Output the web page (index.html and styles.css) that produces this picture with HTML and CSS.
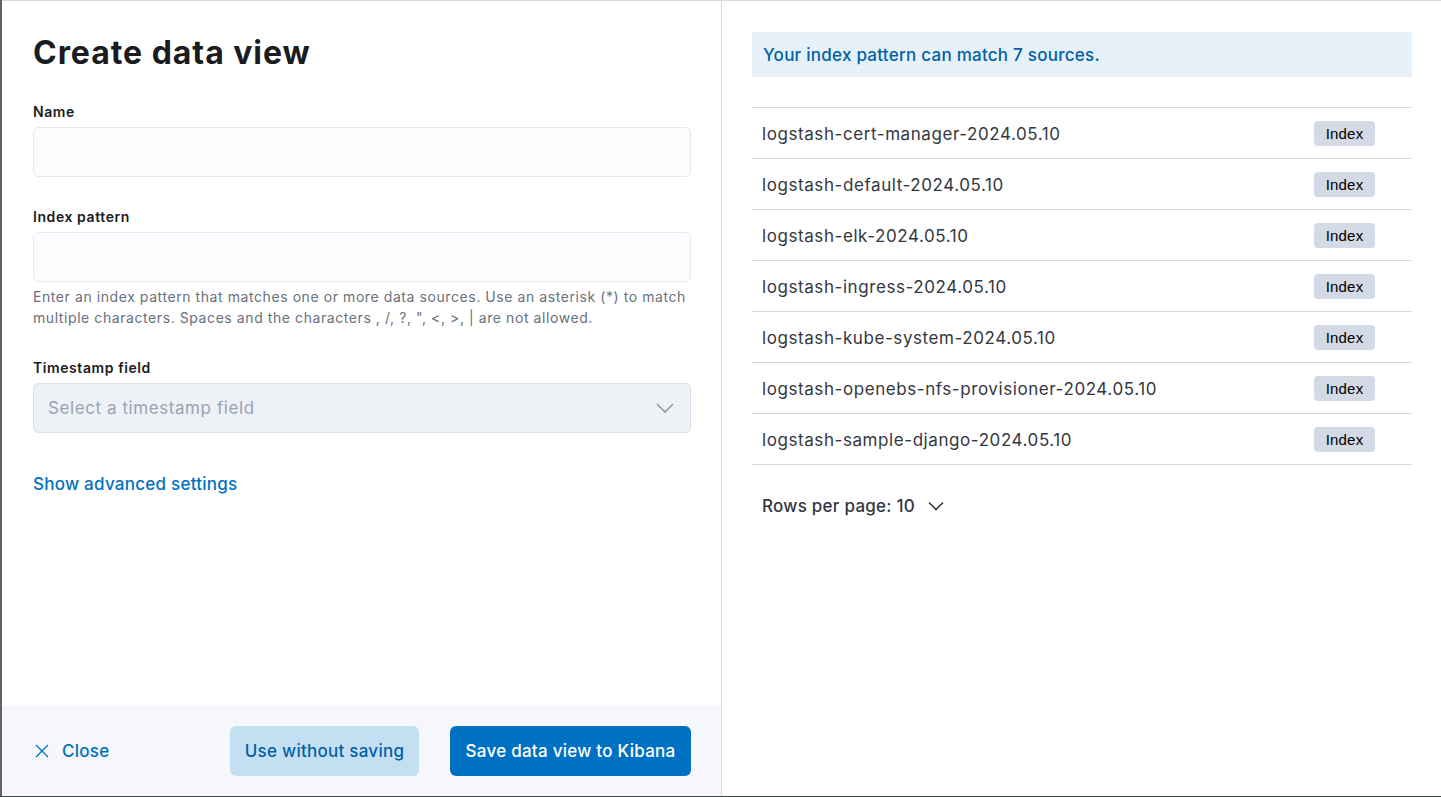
FILE: index.html
```html
<!DOCTYPE html>
<html lang="en">
<head>
<meta charset="utf-8">
<title>Create data view</title>
<link rel="stylesheet" href="styles.css">
</head>
<body>
<div class="frame">
  <div class="edge"></div>
  <div class="flyout">
    <section class="left">
      <div class="left-body">
        <h1 class="title">Create data view</h1>
        <div class="form-row">
          <label class="label">Name</label>
          <div class="input"></div>
        </div>
        <div class="form-row">
          <label class="label">Index pattern</label>
          <div class="input"></div>
          <p class="help">Enter an index pattern that matches one or more data sources. Use an asterisk (*) to match multiple characters. Spaces and the characters , /, ?, ", &lt;, &gt;, | are not allowed.</p>
        </div>
        <div class="form-row">
          <label class="label">Timestamp field</label>
          <div class="select">
            <span class="placeholder">Select a timestamp field</span>
            <svg class="chev" width="18" height="10" viewBox="0 0 18 10"><path d="M1 1l8 8 8-8" fill="none" stroke="#8c95a3" stroke-width="1.5"/></svg>
          </div>
        </div>
        <a class="link">Show advanced settings</a>
      </div>
      <footer class="footer">
        <a class="close">
          <svg width="14" height="14" viewBox="0 0 14 14"><path d="M1 1l12 12M13 1L1 13" stroke="#0071c2" stroke-width="1.3" fill="none"/></svg>
          <span>Close</span>
        </a>
        <div class="actions">
          <button class="btn btn-secondary">Use without saving</button>
          <button class="btn btn-primary">Save data view to Kibana</button>
        </div>
      </footer>
    </section>
    <section class="right">
      <div class="callout">Your index pattern can match 7 sources.</div>
      <div class="table">
        <div class="row"><span class="name">logstash-cert-manager-2024.05.10</span><span class="type"><span class="badge">Index</span></span></div>
        <div class="row"><span class="name">logstash-default-2024.05.10</span><span class="type"><span class="badge">Index</span></span></div>
        <div class="row"><span class="name">logstash-elk-2024.05.10</span><span class="type"><span class="badge">Index</span></span></div>
        <div class="row"><span class="name">logstash-ingress-2024.05.10</span><span class="type"><span class="badge">Index</span></span></div>
        <div class="row"><span class="name">logstash-kube-system-2024.05.10</span><span class="type"><span class="badge">Index</span></span></div>
        <div class="row"><span class="name">logstash-openebs-nfs-provisioner-2024.05.10</span><span class="type"><span class="badge">Index</span></span></div>
        <div class="row"><span class="name">logstash-sample-django-2024.05.10</span><span class="type"><span class="badge">Index</span></span></div>
      </div>
      <div class="pager">
        <span>Rows per page: 10</span>
        <svg width="16" height="10" viewBox="0 0 16 10"><path d="M1 1.5l7 7 7-7" fill="none" stroke="#343741" stroke-width="1.6"/></svg>
      </div>
    </section>
  </div>
</div>
</body>
</html>
```

FILE: styles.css
```css
* { box-sizing: border-box; }
html, body { margin: 0; padding: 0; }
body {
  font-family: Inter, "Noto Sans", "Liberation Sans", sans-serif;
  letter-spacing: 0.036em;
  color: #343741;
  background: #ffffff;
  width: 1441px;
  height: 797px;
  overflow: hidden;
}
.frame {
  display: flex;
  height: 797px;
}
.edge {
  width: 2px;
  background: #5f6469;
  border-bottom: 1px solid #3d4848;
}
.flyout {
  flex: 1;
  display: flex;
  border-top: 1px solid #d3dae6;
  border-bottom: 1px solid #3d4848;
}
.left {
  width: 720px;
  display: flex;
  flex-direction: column;
  border-right: 1px solid #d3dae6;
}
.left-body {
  flex: 1;
  padding: 32px 30px 0 31px;
}
.title {
  margin: 0 0 29px 0;
  font-size: 32px;
  line-height: 40px;
  font-weight: 700;
  letter-spacing: 0.03em;
  color: #1a1c21;
}
.form-row {
  margin-bottom: 30px;
}
.label {
  display: block;
  font-size: 14px;
  line-height: 20px;
  font-weight: 600;
  color: #1a1c21;
  margin-bottom: 5px;
}
.input {
  height: 50px;
  border: 1px solid #e3e8f2;
  border-radius: 6px;
  background: #fbfcfd;
}
.help {
  margin: 4px 0 0;
  font-size: 14px;
  line-height: 21px;
  color: #69707d;
}
.select {
  height: 50px;
  border: 1px solid #d8dfea;
  border-radius: 6px;
  background: #eef2f7;
  display: flex;
  align-items: center;
  justify-content: space-between;
  padding: 0 16px 0 14px;
}
.placeholder {
  font-size: 17px;
  color: #98a2b3;
}
.link {
  display: inline-block;
  margin-top: 9px;
  font-size: 17px;
  line-height: 24px;
  font-weight: 500;
  letter-spacing: 0.015em;
  color: #0071c2;
}
.footer {
  height: 90px;
  background: #f5f7fa;
  display: flex;
  align-items: center;
  justify-content: space-between;
  padding: 0 30px 0 33px;
}
.close {
  display: flex;
  align-items: center;
  gap: 13px;
  color: #0071c2;
  font-size: 17px;
  font-weight: 500;
  letter-spacing: 0.015em;
}
.actions {
  display: flex;
  gap: 31px;
}
.btn {
  height: 50px;
  border: none;
  border-radius: 6px;
  font-family: inherit;
  letter-spacing: 0.015em;
  font-size: 17px;
  font-weight: 500;
  padding: 0;
}
.btn-secondary {
  background: #c5dff2;
  color: #0061a6;
  width: 189px;
}
.btn-primary {
  background: #0071c2;
  color: #ffffff;
  width: 241px;
}
.right {
  flex: 1;
  padding: 31px 29px 0 30px;
}
.callout {
  height: 45px;
  background: #e6f1fa;
  color: #0061a6;
  font-size: 17px;
  font-weight: 500;
  letter-spacing: 0.015em;
  display: flex;
  align-items: center;
  padding-left: 11px;
  margin-bottom: 30px;
}
.table {
  border-top: 1px solid #d3dae6;
}
.row {
  height: 51px;
  border-bottom: 1px solid #d3dae6;
  display: flex;
  align-items: center;
  padding-left: 10px;
}
.name {
  flex: 1;
  font-size: 17px;
  color: #343741;
  padding-top: 2px;
}
.type {
  width: 98px;
}
.badge {
  display: inline-flex;
  align-items: center;
  justify-content: center;
  width: 61px;
  height: 25px;
  border-radius: 4px;
  background: #d3dae6;
  color: #000000;
  font-family: "Liberation Sans", Arial, sans-serif;
  letter-spacing: 0.2px;
  font-size: 15px;
}
.pager {
  display: flex;
  align-items: center;
  gap: 13px;
  padding: 31px 0 0 10px;
  font-size: 17px;
  font-weight: 500;
  letter-spacing: 0.015em;
  color: #343741;
}
```
